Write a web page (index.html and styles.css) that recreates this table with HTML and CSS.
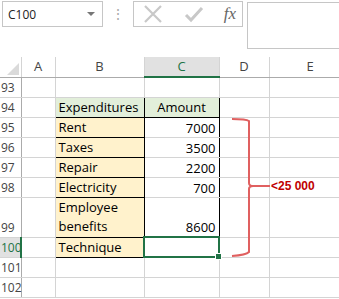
FILE: index.html
```html
<!DOCTYPE html>
<html lang="en">
<head>
    <meta charset="UTF-8">
    <title>Expenditures</title>
    <link rel="stylesheet" href="styles.css">
</head>
<body>
    <div class="formula-bar">
        <div class="name-box">
            <span>C100</span>
            <span class="arrow"></span>
        </div>
        <div class="dots">&#8942;</div>
        <div class="fx-tools">
            <svg width="22" height="22" viewBox="0 0 22 22"><path d="M3 3 L19 19 M19 3 L3 19" stroke="#c8c8c8" stroke-width="2.2" fill="none"/></svg>
            <svg width="22" height="22" viewBox="0 0 22 22"><path d="M3 12 L8 17 L19 5" stroke="#c8c8c8" stroke-width="3" fill="none"/></svg>
            <span class="fx">fx</span>
        </div>
        <div class="formula-input"></div>
    </div>

    <div class="sheet">
        <table class="grid">
            <colgroup>
                <col class="c-rh"><col class="c-a"><col class="c-b"><col class="c-c"><col class="c-d"><col class="c-e">
            </colgroup>
            <tr class="col-heads">
                <th class="corner"><span class="tri"></span></th>
                <th>A</th><th>B</th><th class="active">C</th><th>D</th><th>E</th>
            </tr>
            <tr><th class="rh">93</th><td></td><td></td><td></td><td></td><td></td></tr>
            <tr><th class="rh">94</th><td></td><td class="head tb">Expenditures</td><td class="head tb center">Amount</td><td></td><td></td></tr>
            <tr><th class="rh">95</th><td></td><td class="item">Rent</td><td class="num">7000</td><td></td><td></td></tr>
            <tr><th class="rh">96</th><td></td><td class="item">Taxes</td><td class="num">3500</td><td></td><td></td></tr>
            <tr><th class="rh">97</th><td></td><td class="item">Repair</td><td class="num">2200</td><td></td><td></td></tr>
            <tr><th class="rh">98</th><td></td><td class="item">Electricity</td><td class="num">700</td><td></td><td></td></tr>
            <tr class="tall"><th class="rh">99</th><td></td><td class="item wrap">Employee<br>benefits</td><td class="num">8600</td><td></td><td></td></tr>
            <tr><th class="rh active">100</th><td></td><td class="item">Technique</td><td class="selected"><span class="handle"></span></td><td></td><td></td></tr>
            <tr><th class="rh">101</th><td></td><td></td><td></td><td></td><td></td></tr>
            <tr><th class="rh">102</th><td></td><td></td><td></td><td></td><td></td></tr>
        </table>

        <svg class="bracket" width="80" height="150" viewBox="0 0 80 150">
            <path d="M2 3 Q16 3 19 5 L19 67 Q19 70 23 70 L40 70 M23 70 Q19 70 19 73 L19 136 Q16 139 2 140" stroke="#e06060" stroke-width="2" fill="none"/>
        </svg>
        <div class="note">&lt;25 000</div>
    </div>
</body>
</html>
```

FILE: styles.css
```css
body {
    margin: 0;
    background: #fff;
    font-family: "Open Sans", "Liberation Sans", sans-serif;
    width: 339px;
    height: 299px;
    overflow: hidden;
}
.formula-bar {
    display: flex;
    align-items: flex-start;
    height: 58px;
    padding-top: 1px;
    box-sizing: border-box;
}
.name-box {
    margin-left: 2px;
    width: 101px;
    height: 26px;
    border: 1px solid #c6c6c6;
    box-sizing: border-box;
    display: flex;
    align-items: center;
    justify-content: space-between;
    padding: 0 7px 0 5px;
    font-size: 12px;
    color: #222;
}
.arrow {
    width: 0;
    height: 0;
    border-left: 4px solid transparent;
    border-right: 4px solid transparent;
    border-top: 4px solid #777;
}
.dots {
    width: 30px;
    text-align: center;
    color: #aaa;
    font-size: 14px;
    line-height: 26px;
}
.fx-tools {
    width: 110px;
    height: 26px;
    border: 1px solid #c6c6c6;
    box-sizing: border-box;
    display: flex;
    align-items: center;
    justify-content: space-between;
    padding: 0 6px 0 8px;
}
.fx {
    font-family: "Liberation Serif", serif;
    font-style: italic;
    font-size: 17px;
    color: #666;
}
.formula-input {
    margin-left: 4px;
    margin-top: 1px;
    flex: 1;
    height: 45px;
    border: 1px solid #c6c6c6;
    border-right: none;
}
.sheet {
    position: relative;
    margin-top: -1px;
}
.grid {
    border-collapse: collapse;
    table-layout: fixed;
    width: 351px;
    font-family: "Open Sans", "Liberation Sans", sans-serif;
    font-size: 13px;
}
.c-rh { width: 21px; }
.c-a { width: 34px; }
.c-b { width: 89px; }
.c-c { width: 75px; }
.c-d { width: 50px; }
.c-e { width: 82px; }
.grid tr {
    height: 20px;
}
.grid tr.tall {
    height: 40px;
}
.grid td {
    border: 1px solid #d4d4d4;
    padding: 0 3px;
    line-height: 18px;
    color: #000;
    white-space: nowrap;
}
.grid tr.col-heads {
    height: 20px;
}
.col-heads th {
    font-weight: normal;
    font-size: 13px;
    line-height: 17px;
    color: #444;
    border-right: 1px solid #d4d4d4;
    border-bottom: 1px solid #ababab;
    background: #fff;
}
.col-heads th.active {
    background: #e1e1e1;
    color: #217346;
    border-bottom: 2px solid #217346;
}
.corner {
    position: relative;
}
.tri {
    position: absolute;
    right: 2px;
    bottom: 2px;
    width: 0;
    height: 0;
    border-left: 12px solid transparent;
    border-bottom: 12px solid #dadada;
}
.rh {
    font-weight: normal;
    font-size: 12px;
    line-height: 17px;
    color: #444;
    text-align: left;
    padding: 0 0 0 1px;
    border-right: 1px solid #ababab;
    border-bottom: 1px solid #d4d4d4;
    vertical-align: middle;
    background: #fff;
}
.tall .rh {
    vertical-align: bottom;
    padding-bottom: 1px;
}
.rh.active {
    background: #e1e1e1;
    color: #217346;
    border-right: 2px solid #217346;
}
.grid td.head {
    background: #e2efda;
    border: 1px solid #000;
}
.center {
    text-align: center;
}
.grid td.item {
    background: #fff2cc;
    border: 1px solid #000;
}
.grid td.wrap {
    white-space: normal;
    line-height: 19px;
}
.grid td.num {
    text-align: right;
    border-right: 1px solid #000;
    vertical-align: bottom;
}
.grid td.selected {
    border: 2px solid #217346;
    position: relative;
}
.handle {
    position: absolute;
    right: -4px;
    bottom: -4px;
    width: 5px;
    height: 5px;
    background: #217346;
    border: 1px solid #fff;
}
.bracket {
    position: absolute;
    left: 230px;
    top: 59px;
}
.note {
    position: absolute;
    left: 271px;
    top: 122px;
    color: #c00000;
    font-weight: bold;
    font-size: 12px;
    font-family: "Liberation Sans", sans-serif;
}
```
